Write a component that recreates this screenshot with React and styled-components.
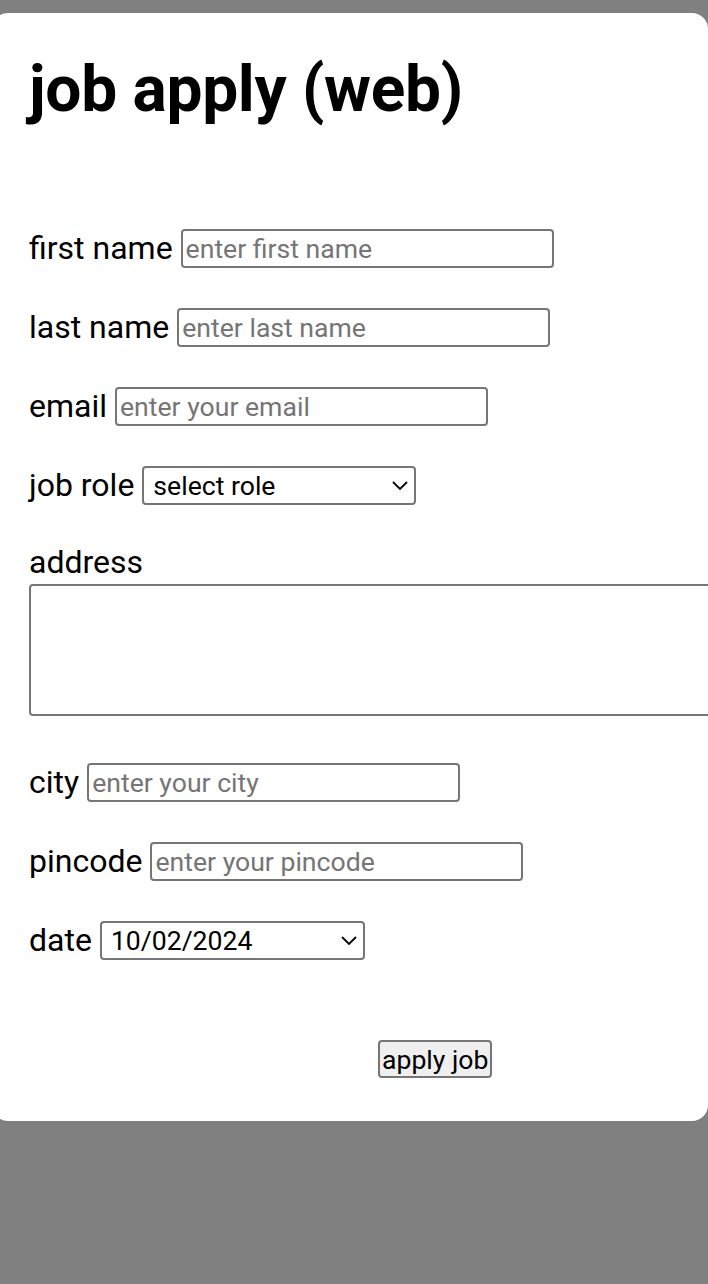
import React from "react";
import styled, { createGlobalStyle } from "styled-components";

const GlobalStyle = createGlobalStyle`
  body {
    margin: 0;
    background: #808080;
    font-family: Roboto, "Liberation Sans", sans-serif;
    overflow: hidden;
  }
`;

const Page = styled.div`
  min-height: 1284px;
  padding-top: 13px;
  box-sizing: border-box;
`;

const Card = styled.div`
  margin-left: -8px;
  width: 716px;
  background: #fff;
  border-radius: 16px;
  padding: 0 0 43px 37px;
  box-sizing: border-box;
`;

const Title = styled.h1`
  margin: 0;
  padding: 40px 0 0;
  font-size: 64px;
  line-height: 1.17;
  font-weight: 700;
  letter-spacing: -0.3px;
  color: #000;
`;

const Form = styled.form`
  display: flex;
  flex-direction: column;
  gap: 40px;
  margin-top: 101px;
`;

const Row = styled.div`
  display: flex;
  align-items: center;
  height: 39px;
  gap: 8px;
`;

const Label = styled.label`
  font-size: 32px;
  color: #000;
  line-height: 1.1;
  white-space: nowrap;
`;

const Field = styled.input`
  width: 373px;
  height: 39px;
  box-sizing: border-box;
  border: 2px solid #767676;
  border-radius: 4px;
  padding: 0 3px;
  font-family: inherit;
  font-size: 26.6px;
  color: #000;
  background: #fff;
  margin: 0;

  &::placeholder {
    color: #757575;
  }
`;

const SelectWrap = styled.div`
  position: relative;
  width: ${(p) => p.width}px;
  height: 39px;
`;

const Select = styled.select`
  appearance: none;
  width: 100%;
  height: 100%;
  box-sizing: border-box;
  border: 2px solid #767676;
  border-radius: 4px;
  padding: 0 0 0 9px;
  font-family: inherit;
  font-size: 26.6px;
  color: #000;
  background: #fff;
  margin: 0;
`;

const Chevron = styled.svg`
  position: absolute;
  right: 7px;
  top: 14px;
  pointer-events: none;
`;

const AddressBlock = styled.div`
  display: flex;
  flex-direction: column;
  padding-bottom: 7px;
`;

const Area = styled.textarea`
  width: 700px;
  height: 132px;
  box-sizing: border-box;
  margin-top: 4px;
  border: 2px solid #767676;
  border-radius: 4px;
  resize: none;
  font-family: inherit;
  font-size: 26.6px;
`;

const Actions = styled.div`
  display: flex;
  padding-left: 349px;
  margin-top: 40px;
`;

const Button = styled.button`
  height: 38px;
  padding: 0 2px;
  box-sizing: border-box;
  border: 2px solid #767676;
  border-radius: 4px;
  background: #efefef;
  font-family: inherit;
  font-size: 26.6px;
  color: #000;
`;

const ChevronIcon = () => (
  <Chevron width="18" height="12" viewBox="0 0 18 12">
    <path d="M2 2 L9 9 L16 2" fill="none" stroke="#000" strokeWidth="1.8" />
  </Chevron>
);

const TextRow = ({ label, placeholder }) => (
  <Row>
    <Label>{label}</Label>
    <Field type="text" placeholder={placeholder} />
  </Row>
);

const SelectRow = ({ label, value, width }) => (
  <Row>
    <Label>{label}</Label>
    <SelectWrap width={width}>
      <Select defaultValue={value}>
        <option value={value}>{value}</option>
      </Select>
      <ChevronIcon />
    </SelectWrap>
  </Row>
);

export default function App() {
  return (
    <Page>
      <GlobalStyle />
      <Card>
        <Title>job apply (web)</Title>
        <Form onSubmit={(e) => e.preventDefault()}>
          <TextRow label="first name" placeholder="enter first name" />
          <TextRow label="last name" placeholder="enter last name" />
          <TextRow label="email" placeholder="enter your email" />
          <SelectRow label="job role" value="select role" width={274} />
          <AddressBlock>
            <Label>address</Label>
            <Area />
          </AddressBlock>
          <TextRow label="city" placeholder="enter your city" />
          <TextRow label="pincode" placeholder="enter your pincode" />
          <SelectRow label="date" value="10/02/2024" width={265} />
          <Actions>
            <Button type="submit">apply job</Button>
          </Actions>
        </Form>
      </Card>
    </Page>
  );
}
